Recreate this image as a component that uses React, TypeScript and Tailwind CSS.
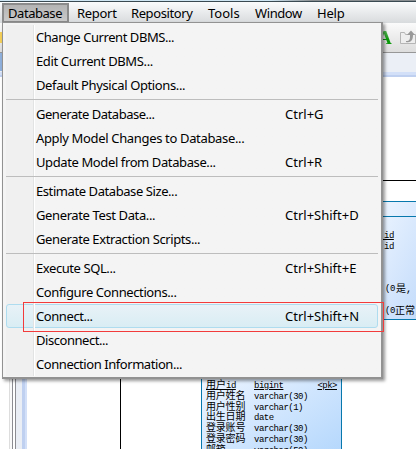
import React from "react";

type Item = { label: string; keys?: string; w: string; active?: boolean };

const groups: Item[][] = [
  [
    { label: "Change Current DBMS...", w: "tracking-[-0.44px]" },
    { label: "Edit Current DBMS...", w: "tracking-[-0.36px]" },
    { label: "Default Physical Options...", w: "tracking-[-0.37px]" },
  ],
  [
    { label: "Generate Database...", keys: "Ctrl+G", w: "tracking-[-0.47px]" },
    { label: "Apply Model Changes to Database...", w: "tracking-[-0.34px]" },
    { label: "Update Model from Database...", keys: "Ctrl+R", w: "tracking-[-0.39px]" },
  ],
  [
    { label: "Estimate Database Size...", w: "tracking-[-0.42px]" },
    { label: "Generate Test Data...", keys: "Ctrl+Shift+D", w: "tracking-[-0.38px]" },
    { label: "Generate Extraction Scripts...", w: "tracking-[-0.4px]" },
  ],
  [
    { label: "Execute SQL...", keys: "Ctrl+Shift+E", w: "tracking-[-0.42px]" },
    { label: "Configure Connections...", w: "tracking-[-0.4px]" },
    { label: "Connect...", keys: "Ctrl+Shift+N", w: "tracking-[-0.42px]", active: true },
    { label: "Disconnect...", w: "tracking-[-0.45px]" },
    { label: "Connection Information...", w: "tracking-[-0.44px]" },
  ],
];

const columns = [
  ["用户姓名", "varchar(30)"],
  ["用户性别", "varchar(1)"],
  ["出生日期", "date"],
  ["登录账号", "varchar(30)"],
  ["登录密码", "varchar(30)"],
  ["邮箱", "varchar(50)"],
];

const mono = "font-['Liberation_Mono','Noto_Sans_CJK_SC',monospace]";
const latin = "text-[9px] tracking-[-0.5px]";

function MenuBar() {
  return (
    <nav className="flex h-[21px] shrink-0 items-center bg-linear-to-b from-[#fafbfc] to-[#d8dbdd] pl-[2px] text-[13px] leading-[18px]">
      <span className="flex h-[20px] w-[67px] items-center border-2 border-[#8b8b8b] bg-linear-to-b from-[#b4b4b4] to-[#c9c9c9] pl-1 tracking-[-0.45px]">Database</span>
      <span className="ml-[8px] w-[54px] tracking-[-0.3px]">Report</span>
      <span className="w-[77px] tracking-[-0.4px]">Repository</span>
      <span className="w-[47px]">Tools</span>
      <span className="w-[62px] tracking-[-0.4px]">Window</span>
      <span className="tracking-[-0.2px]">Help</span>
    </nav>
  );
}

function Toolbar() {
  return (
    <div className="flex h-[30px] shrink-0 items-start justify-between border-b border-[#979797] bg-linear-to-b from-[#fbfbfb] to-[#dddddd]">
      <div className="mt-[9px] h-[11px] w-2 bg-[#f4cf58]" />
      <div className="flex w-[38px]">
        <span className="w-[14px] bg-linear-to-b from-[#5cc85a] from-[30%] to-[#0a9a0a] to-[70%] bg-clip-text pt-[6px] font-['Liberation_Serif',serif] text-[19px] leading-[17px] font-bold text-transparent">A</span>
        <svg width="17" height="18" viewBox="0 0 17 18" className="mt-[5px] ml-[8px] shrink-0">
          <path d="M.5 15.500V4.500h4l1 2h10v9z" fill="#eeeeee" stroke="#b5b5b5" />
          <path d="M6 13c4 0 4-2 4-6H7l4-4.500 4 4.500h-2c0 5-2 8-7 7z" fill="#999" />
        </svg>
      </div>
    </div>
  );
}

function UserTable() {
  return (
    <div className={`absolute left-[174px] top-[298px] h-[90px] w-[141px] border-x border-[#0778ad] bg-linear-to-br from-[#eef5ff] to-[#b0d5fc] pl-[4px] pt-[6px] text-[10px] leading-[10.8px] ${mono}`}>
      <div className="flex h-[10.8px]">
        <u className="w-[48px] whitespace-nowrap">用户<span className={latin}>id</span></u>
        <u className={`flex-1 ${latin}`}>bigint</u>
        <u className={`pr-1 ${latin}`}>&lt;pk&gt;</u>
      </div>
      {columns.map(([name, type]) => (
        <div className="flex h-[10.8px]" key={name}>
          <span className="w-[48px] tracking-[-0.2px]">{name}</span>
          <span className={latin}>{type}</span>
        </div>
      ))}
    </div>
  );
}

function DetailTable() {
  return (
    <div className={`absolute left-[329px] top-[124px] h-[119px] w-[60px] border-y border-[#0778ad] bg-linear-to-br from-[#f6faff] to-[#c4dcfb] text-[10px] leading-[11px] ${mono}`}>
      <div className="h-[15px] border-b border-[#0778ad]" />
      <div className="flex flex-col items-start pt-[13px] pl-[8px] whitespace-nowrap">
        <u className="h-[11px]">用户<span className={latin}>id</span></u>
        <span className="h-[11px]">用户<span className={latin}>id</span></span>
        <span className="mt-[32px] flex h-[11px] pl-[21px]"><span className={`w-[11px] ${latin}`}>(0</span>是, 1</span>
        <span className="mt-[11px] flex h-[11px] pl-[21px]"><span className={`w-[10px] ${latin}`}>(0</span>正常,</span>
      </div>
    </div>
  );
}

function Canvas() {
  return (
    <div className="flex min-h-0 flex-1">
      <div className="flex w-[27px] shrink-0 bg-white">
        <div className="ml-[9px] w-[3px] border-l border-[#dddddd] bg-[#fafafa]" />
        <div className="w-[4px] border-x border-[#8c8c92] bg-white" />
        <div className="w-[6px] bg-[#eaeef5]" />
        <div className="w-[3px] bg-[#bfd0f0]" />
        <div className="w-[2px] bg-[#d3e0f8]" />
      </div>
      <div className="relative flex-1 bg-white">
        <div className="absolute left-[93px] top-[103px] h-[300px] w-[300px] border-l border-t border-black" />
        <DetailTable />
        <UserTable />
      </div>
    </div>
  );
}

function DatabaseMenu() {
  return (
    <div className="absolute left-[2px] top-[22px] flex h-[357px] w-[381px] flex-col border border-r-2 border-b-2 border-[#929292] bg-[#f4f4f4] py-[2px] pl-[3px] pr-[3px] text-[13px] shadow-[2px_2px_3px_#0006]">
      <div className="relative flex flex-1 flex-col bg-linear-to-r from-[#f0f0f0] from-[28px] to-[#f4f4f4] to-[28px]">
        <div className="absolute inset-y-0 left-[27px] w-[2px] border-l border-[#e2e3e3] bg-white" />
        {groups.map((group, i) => (
          <React.Fragment key={i}>
            {i > 0 && <hr className="relative my-[2px] h-px border-0 bg-[#bdbdbd]" />}
            {group.map((it) => (
              <div key={it.label} className={it.active ? "flex h-[24px] items-center rounded-[3px] border border-[#aedcef] bg-linear-to-b from-[#e8f2f7] to-[#d9edf4] pt-px pl-[29px]" : "flex h-[24px] items-center pt-[2px] pl-[30px]"}>
                <span className={`w-[249px] whitespace-nowrap ${it.w}`}>{it.label}</span>
                <span className="whitespace-nowrap">{it.keys}</span>
              </div>
            ))}
          </React.Fragment>
        ))}
      </div>
    </div>
  );
}

export default function App() {
  return (
    <main className="relative flex h-[449px] w-[416px] flex-col overflow-hidden bg-white font-['Noto_Sans','Noto_Sans_CJK_SC',sans-serif] text-black">
      <div className="h-[2px] shrink-0 border-b border-[#3a4a52] bg-linear-to-r from-[#cfe6f3] from-[65%] to-[#8a8f92] to-[75%]" />
      <MenuBar />
      <Toolbar />
      <div className="h-[19px] shrink-0 bg-[#ebeff6]">
        <div className="h-[18px] w-[2px] bg-[#8fb0dc]" />
      </div>
      <div className="h-[5px] shrink-0 border-b-2 border-[#bfd0f0] bg-[#d3e0f8]" />
      <Canvas />
      <DatabaseMenu />
      <div className="absolute left-[23px] top-[302px] h-[30px] w-[361px] border border-[#f23b3b]" />
    </main>
  );
}
